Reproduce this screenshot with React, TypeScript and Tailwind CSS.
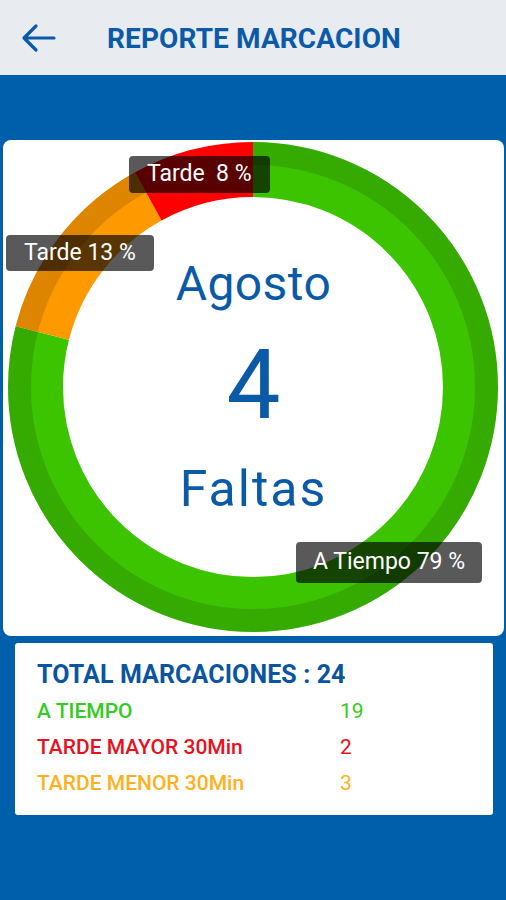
import React from "react";

function Donut() {
  const cx = 250;
  const cy = 247;
  const rMid = 217.5;
  const rDark = 233.5;
  return (
    <svg
      className="absolute left-0 top-0"
      width={501}
      height={496}
      viewBox="0 0 501 496"
    >
      <g transform={`rotate(-90 ${cx} ${cy})`}>
        <circle cx={cx} cy={cy} r={rMid} fill="none" stroke="#3dc400" strokeWidth={55} pathLength={100} strokeDasharray="79 100" />
        <circle cx={cx} cy={cy} r={rMid} fill="none" stroke="#ff9900" strokeWidth={55} pathLength={100} strokeDasharray="13 100" strokeDashoffset={-79} />
        <circle cx={cx} cy={cy} r={rMid} fill="none" stroke="#ff0000" strokeWidth={55} pathLength={100} strokeDasharray="8 100" strokeDashoffset={-92} />
        <circle cx={cx} cy={cy} r={rDark} fill="none" stroke="rgba(0,0,0,0.13)" strokeWidth={23} pathLength={100} strokeDasharray="92 100" />
      </g>
    </svg>
  );
}

export default function App() {
  return (
    <div
      className="w-[506px] h-[900px] bg-[#005fab] flex flex-col overflow-hidden"
      style={{ fontFamily: "Roboto, 'Noto Sans', sans-serif" }}
    >
      <div className="h-[75px] bg-[#e8ebf0] flex items-center shrink-0">
        <div className="w-[107px] flex items-center pl-[20px]">
          <svg width="36" height="30" viewBox="0 0 36 30">
            <path
              d="M34 15H4M16 3L4 15L16 27"
              fill="none"
              stroke="#0b5aa8"
              strokeWidth="3.2"
              strokeLinecap="round"
              strokeLinejoin="round"
            />
          </svg>
        </div>
        <div className="text-[28px] font-bold text-[#0b5aa8] tracking-[0.1px] leading-none mt-[2px]">
          REPORTE MARCACION
        </div>
      </div>

      <div className="pt-[65px] px-[3px]">
        <div className="relative w-[501px] h-[496px] bg-white rounded-[8px]">
          <Donut />
          <div className="absolute inset-0 flex flex-col items-center text-[#0b5aa8]">
            <div className="mt-[120px] text-[48px] tracking-[0.4px] leading-none">Agosto</div>
            <div className="mt-[29px] text-[96px] leading-none">4</div>
            <div className="mt-[31px] text-[50px] tracking-[2px] leading-none">Faltas</div>
          </div>
          <div className="absolute left-[126px] top-[16px] h-[37px] px-[18px] flex items-center rounded-[4px] bg-[rgba(0,0,0,0.65)] text-white text-[23px] whitespace-pre">
            Tarde  8 %
          </div>
          <div className="absolute left-[3px] top-[95px] h-[36px] px-[18px] flex items-center rounded-[4px] bg-[rgba(0,0,0,0.65)] text-white text-[23px] whitespace-pre">
            Tarde 13 %
          </div>
          <div className="absolute left-[293px] top-[402px] h-[41px] px-[17px] flex items-center rounded-[4px] bg-[rgba(0,0,0,0.65)] text-white text-[23px] whitespace-pre">
            A Tiempo 79 %
          </div>
        </div>
      </div>

      <div className="pt-[7px] pl-[15px]">
        <div className="w-[478px] h-[172px] bg-white rounded-[3px] pl-[22px] pt-[18px]">
          <div className="text-[25px] font-bold text-[#0b55a0] leading-[28px] tracking-[0.1px]">
            TOTAL MARCACIONES : 24
          </div>
          <div className="mt-[12px] flex flex-col gap-[15px] text-[21px] leading-[21px] font-medium">
            <div className="flex">
              <span className="w-[303px] text-[#33cc22]">A TIEMPO</span>
              <span className="text-[#33cc22] font-normal">19</span>
            </div>
            <div className="flex">
              <span className="w-[303px] text-[#e8101c]">TARDE MAYOR 30Min</span>
              <span className="text-[#e8101c] font-normal">2</span>
            </div>
            <div className="flex">
              <span className="w-[303px] text-[#ffb020]">TARDE MENOR 30Min</span>
              <span className="text-[#ffb020] font-normal">3</span>
            </div>
          </div>
        </div>
      </div>
    </div>
  );
}
